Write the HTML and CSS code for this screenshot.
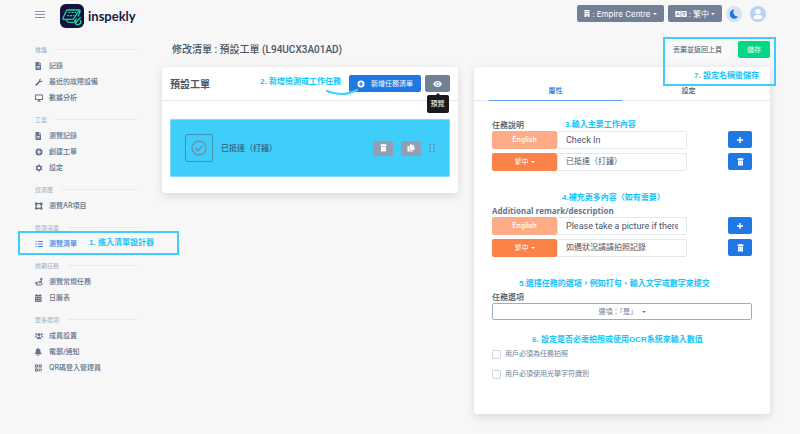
FILE: index.html
```html
<!DOCTYPE html>
<html lang="zh-Hant">

<head>
    <meta charset="UTF-8">
    <meta name="viewport" content="width=device-width, initial-scale=1.0">
    <title>inspekly - 修改清單</title>
    <link rel="stylesheet" href="styles.css">
</head>

<body>
    <header class="topbar">
        <button class="menu-toggle" aria-label="選單">
            <svg viewBox="0 0 10 8" width="10" height="8"><path d="M0 1.5h10M0 4.500h10M0 7.500h10" stroke="#8796a8" stroke-width="1" /></svg>
        </button>
        <a class="brand" href="#">
            <svg viewBox="0 0 72 72" width="24" height="24" fill="none" stroke="#1fd3a0" stroke-width="4" stroke-linecap="round" stroke-linejoin="round">
                <rect width="72" height="72" rx="17" fill="#15123f" stroke="none" />
                <path d="M23 18h34c3 0 4 2 3 5l-5 13M23 18c-3 0-4 2-5 5L9 42c-1 3 0 4 3 4h25c3 0 4-1 6-4l6-10c2-5 4-8 9-12M19 48c2 5 4 7 8 7h13" />
                <path d="M27 25h3M36 25h3M45 25h2M23 35h3M32 35h3M41 35h1" />
                <path d="M45 49l4 5 12-13M62 50a9 9 0 1 1-13-5" />
            </svg>
            <span>inspekly</span>
        </a>
        <div class="topbar-actions">
            <div class="dropdown dropdown-grey">
                <svg viewBox="0 0 12 14" width="6" height="7"><path fill="#fff" fill-rule="evenodd" d="M1 0h10v14H7.500v-3h-3v3H1zM3 2v2h2V2zM7 2v2h2V2zM3 6v2h2V6zM7 6v2h2V6z" /></svg>
                <span>:</span>
                <select aria-label="地點"><option>Empire Centre</option></select>
            </div>
            <div class="dropdown dropdown-grey">
                <svg viewBox="0 0 36 18" width="12" height="6">
                    <path fill="#fff" d="M1 0h34v18H1z" />
                    <path d="M5 14l4-10 4 10M6.500 10.500h5M18 0v18M22 5h10M27 2v3M30 5c-1 4-4 7-7 9M24 7c1 3 4 5 7 7" stroke="#718096" stroke-width="2" fill="none" />
                </svg>
                <span>:</span>
                <select aria-label="語言"><option>繁中</option></select>
            </div>
            <button class="round-button" aria-label="深色模式">
                <svg viewBox="0 0 16 16" width="16" height="16"><circle cx="8" cy="8" r="8" fill="#d8e3f1" /><path fill="#1f74e4" d="M8.500 3.500a4.600 4.600 0 1 0 3.600 7.300 4.400 4.400 0 0 1-3.600-7.300z" /></svg>
            </button>
            <button class="round-button" aria-label="帳戶">
                <svg viewBox="0 0 16 16" width="16" height="16"><circle cx="8" cy="8" r="8" fill="#b9d2f1" /><circle cx="8" cy="5.500" r="2.600" fill="#fff" /><path fill="#fff" d="M3.500 12.500c0-2 1.500-3.500 3-3.500h3c1.500 0 3 1.500 3 3.500-2.500 1-6.500 1-9 0z" /></svg>
            </button>
        </div>
    </header>

    <div class="layout">
        <nav class="sidebar">
            <section class="nav-section">
                <h2>維護</h2>
                <a href="#"><svg viewBox="0 0 16 16"><path fill-rule="evenodd" d="M1 0h7v5.500h4V16H1zM9 0l4 4.500H9zM3.500 8v1.500h6V8zM3.500 11v1.500h6V11z" /></svg>記錄</a>
                <a href="#"><svg viewBox="0 0 16 16"><path d="M15.500 4.500l-2.500 2-2-.5-.5-2 2.200-2.500C10 .6 7.300 2.600 8 6L1 12.500C-.4 14 2 16.500 3.500 15L10 8.500c3.500.8 6-1.500 5.500-4z" /></svg>最近的故障設備</a>
                <a href="#"><svg viewBox="0 0 16 16"><path fill-rule="evenodd" d="M0 1h16v11h-6v2h2v1H4v-1h2v-2H0zM2 3v7h12V3z" /></svg>數據分析</a>
            </section>
            <section class="nav-section">
                <h2>工單</h2>
                <a href="#"><svg viewBox="0 0 16 16"><path fill-rule="evenodd" d="M1 0h7v5.500h4V16H1zM9 0l4 4.500H9zM3.500 8v1.500h6V8zM3.500 11v1.500h6V11z" /></svg>瀏覽記錄</a>
                <a href="#"><svg viewBox="0 0 16 16"><path fill-rule="evenodd" d="M8 1a7 7 0 1 0 0 14A7 7 0 0 0 8 1zM6.800 4h2.400v2.800H12v2.400H9.200V12H6.800V9.200H4V6.800h2.800z" /></svg>創建工單</a>
                <a href="#"><svg viewBox="0 0 16 16"><path fill-rule="evenodd" d="M6.500 1h3l.4 2 1.400.8 2-.7 1.500 2.600-1.500 1.400v1.800l1.500 1.400-1.500 2.600-2-.7-1.400.8-.4 2h-3l-.4-2-1.400-.8-2 .7-1.500-2.600 1.500-1.400V7.100L1.200 5.700l1.500-2.600 2 .7L6.100 3zM8 5.500a2.500 2.500 0 1 0 0 5 2.500 2.500 0 0 0 0-5z" /></svg>設定</a>
            </section>
            <section class="nav-section">
                <h2>資源庫</h2>
                <a href="#"><svg viewBox="0 0 16 16"><path fill-rule="evenodd" d="M0 1h5v1h5V1h5v5h-1v5h1v4h-5v-1H5v1H0v-4h1V6H0zM5 5v1H3.500v5H5v.5h5V11h1.500V6H10V4.500H5z" /></svg>瀏覽AR項目</a>
            </section>
            <section class="nav-section highlighted">
                <h2>檢測清單</h2>
                <a class="active" href="#"><svg viewBox="0 0 16 16"><path d="M6 2h10v2H6zM6 7h10v2H6zM6 12h10v2H6z" /><path d="M0 3l1.500 1.500L4.500 1.500M0 8l1.500 1.500L4.500 6.500M1 13h3" fill="none" stroke="currentColor" stroke-width="1.400" /></svg>瀏覽清單</a>
                <div class="callout-frame"></div>
                <p class="note note-1">1. 進入清單設計器</p>
            </section>
            <section class="nav-section">
                <h2>排期任務</h2>
                <a href="#"><svg viewBox="0 0 16 16"><path d="M14 7H8.500c-2 0-2 2.500 0 2.500h4c3 0 3 4.500 0 4.500H3" fill="none" stroke="currentColor" stroke-width="2" /><path d="M12.500 0A2.500 2.500 0 0 1 15 2.500L12.500 7 10 2.500A2.500 2.500 0 0 1 12.500 0zM3 7.500A2.500 2.500 0 0 1 5.500 10L3 15 .5 10A2.500 2.500 0 0 1 3 7.500z" /></svg>瀏覽常規任務</a>
                <a href="#"><svg viewBox="0 0 16 16"><path fill-rule="evenodd" d="M2 0h2v2h5V0h2v2h2v3H0V2h2zM0 6h13v10H0zM2 8v1.500h2V8zM5.500 8v1.500h2V8zM9 8v1.500h2V8zM2 12v1.500h2V12zM5.500 12v1.500h2V12zM9 12v1.500h2V12z" /></svg>日曆表</a>
            </section>
            <section class="nav-section">
                <h2>更多選項</h2>
                <a href="#"><svg viewBox="0 0 16 16"><circle cx="8" cy="5" r="3" /><circle cx="2.500" cy="4.500" r="2" /><circle cx="13.500" cy="4.500" r="2" /><path d="M3.500 14c0-7 9-7 9 0zM0 11c0-4 2-4 4-3.500L2.500 11zM16 11c0-4-2-4-4-3.500l1.500 3.500z" /></svg>成員設置</a>
                <a href="#"><svg viewBox="0 0 16 16"><path d="M5.200 0h1.600v1.200C10 2 11 4 11 8l2 3v1.500H0V11l1.500-3c0-4 .5-6 3.700-6.800zM4 13.500h5c0 2.500-5 2.500-5 0z" /></svg>電郵/通知</a>
                <a href="#"><svg viewBox="0 0 16 16"><path fill-rule="evenodd" d="M0 1h6v6H0zM2 3v2h2V3zM7.500 1h6v6h-6zM9.500 3v2h2V3zM0 9h6v6H0zM2 11v2h2v-2zM7.500 9h2v1.500h2V9h2v3.500H11V12H9.500v3h-2zM11 13.500h2.500V15H11z" /></svg>QR碼登入管理員</a>
            </section>
        </nav>

        <main class="content">
            <div class="title-row">
                <h1>修改清單 : 預設工單 (L94UCX3A01AD)</h1>
                <div class="title-actions">
                    <button class="btn btn-light">丟棄並返回上頁</button>
                    <button class="btn btn-success">儲存</button>
                    <div class="callout-frame"></div>
                    <p class="note note-7">7. 設定名稱後儲存</p>
                </div>
            </div>

            <div class="columns">
                <section class="card">
                    <div class="card-header">
                        <h2>預設工單</h2>
                        <div class="add-list">
                            <button class="btn btn-primary">
                                <svg viewBox="0 0 16 16" width="8" height="8"><path fill="#fff" fill-rule="evenodd" d="M8 1a7 7 0 1 0 0 14A7 7 0 0 0 8 1zM6.800 4h2.400v2.800H12v2.400H9.200V12H6.800V9.200H4V6.800h2.800z" /></svg>
                                新增任務清單
                            </button>
                            <p class="note note-2">2. 新增檢測或工作任務</p>
                            <svg class="swoosh" viewBox="0 0 32 7" width="32" height="7"><path d="M1 2c9 4 20 4 30-1" fill="none" stroke="#3fd0fb" stroke-width="2" stroke-linecap="round" /></svg>
                        </div>
                        <div class="preview">
                            <button class="btn btn-grey" aria-label="預覽" aria-describedby="preview-tip">
                                <svg viewBox="0 0 18 12" width="9" height="6"><path fill="#fff" d="M0 6c4-8 14-8 18 0-4 8-14 8-18 0z" /><circle cx="9" cy="6" r="4" fill="#718096" /><circle cx="9" cy="6" r="2.500" fill="#fff" /></svg>
                            </button>
                            <div class="tooltip" id="preview-tip" role="tooltip">預覽</div>
                        </div>
                    </div>
                    <div class="card-body">
                        <div class="task">
                            <div class="task-icon">
                                <svg viewBox="0 0 16 16" width="16" height="16" fill="none" stroke="#708fa8"><circle cx="8" cy="8" r="7" stroke-width="1.300" /><path d="M4.500 8l2.600 2.700 4.600-5" stroke-width="1.600" /></svg>
                            </div>
                            <span class="task-name">已抵達（打鐘）</span>
                            <button class="btn-mini" aria-label="刪除">
                                <svg viewBox="0 0 14 16" width="7" height="8"><path fill="#fff" d="M1 1h3l1-1h4l1 1h3v3H1zM2 5h10v10H2z" /></svg>
                            </button>
                            <button class="btn-mini" aria-label="複製">
                                <svg viewBox="0 0 16 16" width="8" height="8"><path fill="#fff" d="M6 1h5v4h4v7H6zM12 1l3 3h-3zM1 4h4v9h7v2H1z" /></svg>
                            </button>
                            <svg viewBox="0 0 6 8" width="6" height="8" fill="#5f9dbd"><path d="M0 0h2v2H0zM4 0h2v2H4zM0 3h2v2H0zM4 3h2v2H4zM0 6h2v2H0zM4 6h2v2H4z" /></svg>
                        </div>
                    </div>
                </section>

                <section class="card">
                    <div class="tabs" role="tablist">
                        <button class="tab active" role="tab" aria-selected="true">屬性</button>
                        <button class="tab" role="tab" aria-selected="false">設定</button>
                    </div>
                    <form class="form">
                        <div class="field">
                            <label for="desc-en">任務說明</label>
                            <p class="note note-3">3.輸入主要工作內容</p>
                            <div class="input-row">
                                <button type="button" class="lang-button" disabled>English</button>
                                <input id="desc-en" type="text" value="Check In">
                                <button type="button" class="btn btn-primary btn-square" aria-label="新增">
                                    <svg viewBox="0 0 8 8" width="8" height="8"><path d="M4 1v6M1 4h6" stroke="#fff" stroke-width="1.400" /></svg>
                                </button>
                            </div>
                            <div class="input-row">
                                <div class="dropdown dropdown-orange"><select aria-label="說明語言"><option>繁中</option></select></div>
                                <input class="input-zh" type="text" value="已抵達（打鐘）" aria-label="任務說明（繁中）">
                                <button type="button" class="btn btn-primary btn-square" aria-label="刪除">
                                    <svg viewBox="0 0 14 16" width="7" height="8"><path fill="#fff" d="M1 1h3l1-1h4l1 1h3v3H1zM2 5h10v10H2z" /><path d="M5 7v6M9 7v6" stroke="#8fbaf1" /></svg>
                                </button>
                            </div>
                        </div>
                        <div class="field">
                            <label class="label-latin" for="remark-en">Additional remark/description</label>
                            <p class="note note-4">4.補充更多內容（如有需要）</p>
                            <div class="input-row">
                                <button type="button" class="lang-button" disabled>English</button>
                                <input id="remark-en" type="text" value="Please take a picture if there">
                                <button type="button" class="btn btn-primary btn-square" aria-label="新增">
                                    <svg viewBox="0 0 8 8" width="8" height="8"><path d="M4 1v6M1 4h6" stroke="#fff" stroke-width="1.400" /></svg>
                                </button>
                            </div>
                            <div class="input-row">
                                <div class="dropdown dropdown-orange"><select aria-label="備註語言"><option>繁中</option></select></div>
                                <input class="input-zh" type="text" value="如遇狀況請請拍照記錄" aria-label="備註（繁中）">
                                <button type="button" class="btn btn-primary btn-square" aria-label="刪除">
                                    <svg viewBox="0 0 14 16" width="7" height="8"><path fill="#fff" d="M1 1h3l1-1h4l1 1h3v3H1zM2 5h10v10H2z" /><path d="M5 7v6M9 7v6" stroke="#8fbaf1" /></svg>
                                </button>
                            </div>
                        </div>
                        <div class="field">
                            <label for="task-option">任務選項</label>
                            <p class="note note-5">5.選擇任務的選項，例如打勾、輸入文字或數字來提交</p>
                            <div class="dropdown dropdown-outline"><select id="task-option"><option>選項：「是」</option></select></div>
                        </div>
                        <div class="checks">
                            <p class="note note-6">6. 設定是否必需拍照或使用OCR系統來輸入數值</p>
                            <label><input type="checkbox">用戶必須為任務拍照</label>
                            <label><input type="checkbox">用戶必須使用光學字符識別</label>
                        </div>
                    </form>
                </section>
            </div>
        </main>
    </div>
</body>

</html>
```
FILE: styles.css
```css
:root {
    --primary: #1f78e4;
    --grey: #718096;
    --orange: #fc8348;
    --orange-light: #fdac87;
    --green: #00d885;
    --callout: #3fcdfa;
    --note: #12c6fb;
    --text: #4a5568;
    --text-muted: #718096;
    --border: #e2e8f0;
    --page-bg: #f7f7f7;
    --radius: 2px;
}

* {
    margin: 0;
    padding: 0;
    box-sizing: border-box;
}

body {
    background: var(--page-bg);
    color: var(--text);
    font-family: Inter, "Noto Sans CJK TC", sans-serif;
    font-size: 7px;
    line-height: 12px;
}

button,
input,
select {
    font: inherit;
    color: inherit;
    border: none;
    background: none;
}

button,
select {
    cursor: pointer;
}

a {
    color: inherit;
    text-decoration: none;
}

svg {
    flex: none;
    display: block;
}

/* Top bar */
.topbar {
    display: flex;
    align-items: center;
    height: 31px;
    padding: 0 34px 4px 35px;
}

.menu-toggle {
    margin-right: 15px;
}

.brand {
    display: flex;
    align-items: center;
    gap: 4px;
    padding-top: 4px;
    font-family: Lato, sans-serif;
    font-size: 13px;
    line-height: 20px;
    font-weight: bold;
    color: #1b1842;
}

.topbar-actions {
    display: flex;
    align-items: center;
    gap: 4px;
    margin-left: auto;
}

.round-button + .round-button {
    margin-left: 4px;
}

/* Drop-downs */
.dropdown {
    display: flex;
    align-items: center;
    justify-content: center;
    gap: 2px;
    border-radius: var(--radius);
}

.dropdown::after {
    content: "";
    border: 2px solid transparent;
    border-top-color: currentColor;
    border-bottom: none;
}

.dropdown select {
    appearance: none;
    outline: none;
}

.dropdown-grey {
    height: 17px;
    padding: 0 7px;
    background: var(--grey);
    color: #fff;
    font-size: 8px;
}

.dropdown-orange {
    background: var(--orange);
    color: #fff;
}

.dropdown-outline {
    height: 17px;
    gap: 4px;
    border: 1px solid #a0aec0;
    color: var(--text-muted);
}

/* Sidebar */
.layout {
    display: flex;
}

.sidebar {
    width: 162px;
    flex: none;
    padding: 10px 24px 0 35px;
}

.nav-section {
    margin-bottom: 5px;
}

.nav-section h2 {
    display: flex;
    align-items: center;
    gap: 8px;
    height: 17px;
    font-size: 6px;
    font-weight: normal;
    color: #a0aec0;
}

.nav-section h2::after {
    content: "";
    flex: 1;
    height: 1px;
    background: #e8eaed;
}

.nav-section a {
    display: flex;
    align-items: center;
    gap: 6px;
    height: 16px;
    color: #64748b;
    font-weight: 500;
}

.nav-section a svg {
    width: 8px;
    height: 8px;
    fill: currentColor;
}

.nav-section a.active {
    color: #3f86e8;
}

/* Page title */
.content {
    flex: 1;
    min-width: 0;
    padding: 10px 30px 20px 0;
}

.title-row {
    display: flex;
    align-items: center;
    justify-content: space-between;
    margin-bottom: 9px;
    padding-left: 10px;
}

.title-row h1 {
    font-family: Roboto, "Noto Sans CJK TC", sans-serif;
    font-size: 10px;
    font-weight: 500;
}

.title-actions {
    position: relative;
    display: flex;
    gap: 8px;
}

/* Buttons */
.btn {
    display: flex;
    align-items: center;
    justify-content: center;
    gap: 6px;
    height: 17px;
    padding: 0 8px;
    border-radius: var(--radius);
    color: #fff;
}

.btn-light {
    background: #f8fafc;
    color: var(--text);
}

.btn-success {
    padding: 0 9px;
    background: var(--green);
}

.btn-primary {
    background: var(--primary);
}

.btn-grey {
    background: var(--grey);
}

/* Cards */
.columns {
    display: grid;
    grid-template-columns: 1fr 1fr;
    align-items: start;
    gap: 16px;
}

.card {
    min-width: 0;
    background: #fff;
    border-radius: 3px;
    box-shadow: 0 3px 10px rgba(0, 0, 0, 0.12);
}

.card-header {
    display: flex;
    align-items: center;
    gap: 4px;
    height: 34px;
    padding: 0 8px;
    border-bottom: 1px solid var(--border);
}

.card-header h2 {
    margin-right: auto;
    font-size: 10px;
    font-weight: 600;
}

.add-list,
.preview {
    position: relative;
}

.tooltip {
    position: absolute;
    top: 20px;
    left: 50%;
    transform: translateX(-50%);
    padding: 3px 4px;
    border-radius: var(--radius);
    background: #1a1a1a;
    color: #fff;
    white-space: nowrap;
}

.tooltip::before {
    content: "";
    position: absolute;
    top: -2px;
    left: calc(50% - 2px);
    border: 2px solid transparent;
    border-bottom-color: #1a1a1a;
    border-top: none;
}

.card-body {
    padding: 18px 8px 16px;
}

.task {
    display: flex;
    align-items: center;
    gap: 8px;
    height: 58px;
    padding: 0 14px;
    background: var(--callout);
    border: 1px solid #7fdcfc;
    border-radius: 1px;
}

.task-icon {
    display: flex;
    align-items: center;
    justify-content: center;
    width: 28px;
    height: 28px;
    border: 1px solid #4391b5;
    border-radius: var(--radius);
}

.task-name {
    margin-right: auto;
    font-size: 8px;
    font-weight: 500;
    color: #35607d;
}

.btn-mini {
    display: flex;
    align-items: center;
    justify-content: center;
    width: 20px;
    height: 15px;
    background: #929fb0;
    border-radius: 1px;
}

/* Tabs */
.tabs {
    display: flex;
    padding: 14px 15px 0;
    border-bottom: 1px solid var(--border);
}

.tab {
    flex: 1;
    height: 20px;
    margin-bottom: -1px;
    border-bottom: 1px solid transparent;
    font-weight: 500;
}

.tab.active {
    color: var(--primary);
    border-bottom-color: #5b9cec;
}

/* Form */
.form {
    display: flex;
    flex-direction: column;
    gap: 34px;
    padding: 18px 18px 34px;
}

.field {
    position: relative;
    display: flex;
    flex-direction: column;
}

.field > label {
    font-size: 8px;
    font-weight: 500;
}

.field > .label-latin {
    font-family: "Open Sans", sans-serif;
    font-weight: 700;
    color: #64748b;
}

.input-row {
    display: grid;
    grid-template-columns: 1fr 2fr auto;
    height: 18px;
}

.input-row + .input-row {
    margin-top: 4px;
}

.lang-button {
    background: var(--orange-light);
    color: #fff;
    border-radius: var(--radius);
    font-weight: 500;
}

.input-row input {
    min-width: 0;
    padding: 0 8px;
    border: 1px solid var(--border);
    border-radius: var(--radius);
    font-family: Roboto, "Noto Sans CJK TC", sans-serif;
    font-size: 9px;
}

.input-row .input-zh {
    font-size: 8px;
}

.btn-square {
    width: 24px;
    margin-left: 41px;
    padding: 0;
}

.checks {
    position: relative;
    display: flex;
    flex-direction: column;
    gap: 8px;
    margin-top: -6px;
    color: var(--text-muted);
}

.checks label {
    display: flex;
    align-items: center;
    gap: 4px;
}

.checks input {
    appearance: none;
    width: 9px;
    height: 9px;
    background: #fff;
    border: 1px solid #cbd5e0;
    border-radius: var(--radius);
}

/* Tutorial notes drawn over the page */
.note {
    position: absolute;
    font-family: "Liberation Sans", "Noto Sans CJK TC", sans-serif;
    font-size: 8px;
    font-weight: bold;
    color: var(--note);
    white-space: nowrap;
}

.callout-frame {
    position: absolute;
    border: 2px solid var(--callout);
    pointer-events: none;
}

.highlighted {
    position: relative;
}

.highlighted .callout-frame {
    top: 12px;
    left: -17px;
    right: -41px;
    height: 24px;
}

.title-actions .callout-frame {
    inset: -4px -6px -28px -2px;
}

.note-1 {
    top: 18px;
    left: 54px;
}

.note-2 {
    top: 1px;
    right: calc(100% + 8px);
}

.swoosh {
    position: absolute;
    top: 14px;
    left: -23px;
}

.note-3 {
    left: 73px;
}

.note-4 {
    top: -13px;
    left: 70px;
}

.note-5 {
    top: -13px;
    left: 27px;
}

.note-6 {
    top: -14px;
    left: 40px;
}

.note-7 {
    top: 29px;
    right: 11px;
}
```
